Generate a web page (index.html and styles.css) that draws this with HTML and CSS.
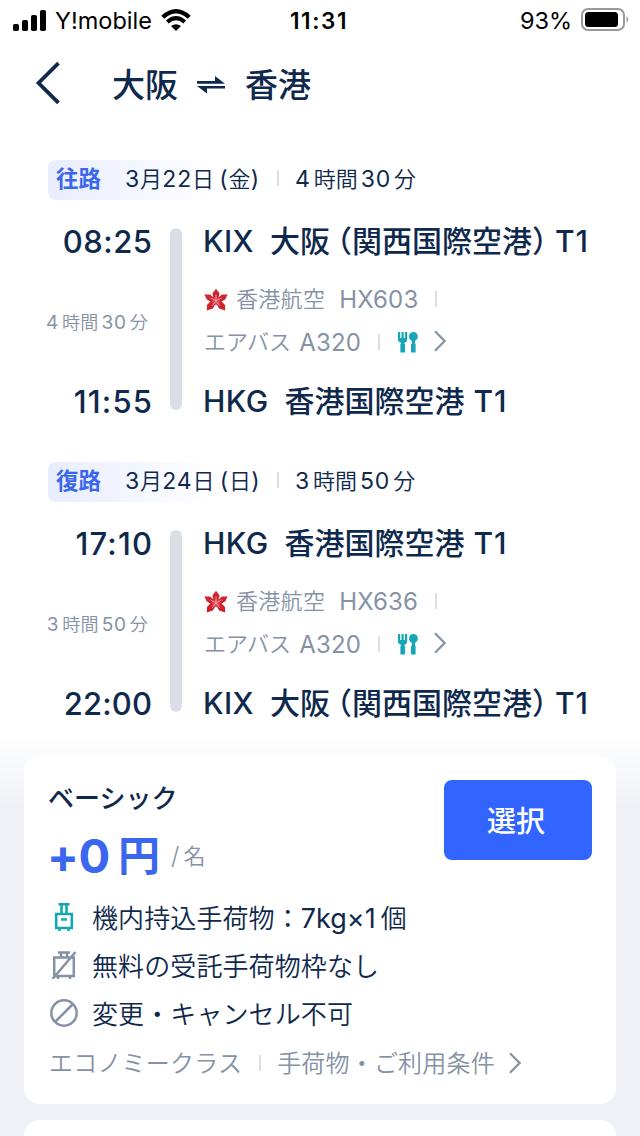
FILE: index.html
```html
<!DOCTYPE html>
<html lang="ja">
<head>
<meta charset="utf-8">
<title>大阪 ⇌ 香港</title>
<link rel="stylesheet" href="styles.css">
</head>
<body>
<svg class="defs" width="0" height="0" aria-hidden="true">
  <symbol id="flower" viewBox="0 0 24 24">
    <path fill="#cf2430" d="M12 .8 15.6 5.400 14.4 9.8 12 11.5 9.6 9.8 8.4 5.400ZM.4 6.6 6 6.600 10 9.800 11.200 13 7.400 14 2.800 11.400ZM23.600 6.600 18 6.600 14 9.800 12.800 13 16.600 14 21.200 11.400ZM2.800 22.600 3 17 7.400 12.600 11.600 12.600 11.400 16.200 8.900 20.400ZM21.200 22.600 21 17 16.600 12.600 12.400 12.600 12.600 16.200 15.100 20.400Z"/>
    <circle cx="12" cy="13.3" r="3.8" fill="#db4b53"/>
    <path stroke="#eda0a4" stroke-width=".9" fill="none" d="M12 6.500V13L6.500 9.800M12 13l5.500-3.200M12 13l-4 5M12 13l4 5"/>
  </symbol>
  <symbol id="meal" viewBox="0 0 20 22">
    <path fill="#16a6b6" d="M0 1H2.200V7H3.500V1H5.700V7H7V1H9.200V8.500Q9.200 11 6.400 11.700V13H7V21.500H2.400V13H3V11.700Q0 11 0 8.500ZM15.400 1A4.300 4.600 0 0 1 17 9.900V13H17.600V21.500H13V13H13.800V9.900A4.300 4.600 0 0 1 15.400 1Z"/>
  </symbol>
  <symbol id="next" viewBox="0 0 12 22"><path d="M1 1.300 10.600 11 1 20.700" fill="none" stroke="#8592a6" stroke-width="2.200"/></symbol>
</svg>

<header class="status">
  <svg class="signal" viewBox="0 0 33 21"><rect y="14" width="6" height="7" rx="1.800"/><rect x="9" y="10" width="6" height="11" rx="1.800"/><rect x="18" y="5" width="6" height="16" rx="1.800"/><rect x="27" width="6" height="21" rx="1.800"/></svg>
  <span class="carrier">Y!mobile</span>
  <svg class="wifi" viewBox="0 0 30 22"><path d="M1.700 8.200Q15-3.800 28.300 8.200" fill="none" stroke="#000" stroke-width="4.200"/><path d="M6.300 13Q15 5.400 23.700 13" fill="none" stroke="#000" stroke-width="4"/><path d="M10 17.100Q15 13.200 20 17.100L15 22Z"/></svg>
  <span class="clock">11:31</span>
  <span class="percent">93%</span>
  <svg class="battery" viewBox="0 0 48 24"><rect x="1" y="1" width="42" height="21" rx="6" fill="none" stroke="#999" stroke-width="2"/><rect x="4" y="4" width="33" height="15" rx="3.500"/><path d="M45.500 8Q49 11.500 45.500 15Z" fill="#999"/></svg>
</header>

<nav class="nav">
  <svg class="back" viewBox="0 0 24 42"><path d="M22 2 3 21 22 40" fill="none" stroke="#0f294d" stroke-width="3.600"/></svg>
  <h1 class="route"><span>大阪</span><svg class="swap" viewBox="0 0 28 18"><path fill="#0f294d" d="M0 5H18V0L28 7.700H0ZM28 12.500H10V17.500L0 10H28Z"/></svg><span>香港</span></h1>
</nav>

<main class="legs">
  <section class="leg">
    <div class="leg-head"><b class="tag">往路</b><span class="date"><i class="n">3</i>月<i class="n">22</i>日<i class="n paren">(</i>金<i class="n">)</i></span><span class="sep"></span><span class="dur"><i class="n">4</i>時間<i class="n">30</i>分</span></div>
    <div class="leg-body">
      <div class="times"><span class="time">08:25</span><span class="small"><i class="n">4</i>時間<i class="n">30</i>分</span><span class="time ones">11:55</span></div>
      <div class="bar"></div>
      <div class="details">
        <div class="airport"><span class="code">KIX</span><span class="place kix">大阪<i class="open">（</i>関西国際空港<i class="close">）</i></span><span class="terminal">T1</span></div>
        <div class="info first"><svg class="flower"><use href="#flower"/></svg><span class="carrier-name">香港航空</span><span class="n">HX603</span><span class="sep"></span></div>
        <div class="info"><span class="plane">エアバス</span><span class="n">A320</span><span class="sep"></span><svg class="meal"><use href="#meal"/></svg><svg class="next"><use href="#next"/></svg></div>
        <div class="airport last"><span class="code">HKG</span><span class="place">香港国際空港</span><span class="terminal">T1</span></div>
      </div>
    </div>
  </section>

  <section class="leg">
    <div class="leg-head"><b class="tag">復路</b><span class="date"><i class="n">3</i>月<i class="n">24</i>日<i class="n paren">(</i>日<i class="n">)</i></span><span class="sep"></span><span class="dur"><i class="n">3</i>時間<i class="n">50</i>分</span></div>
    <div class="leg-body">
      <div class="times"><span class="time ones">17:10</span><span class="small"><i class="n">3</i>時間<i class="n">50</i>分</span><span class="time tight">22:00</span></div>
      <div class="bar"></div>
      <div class="details">
        <div class="airport"><span class="code">HKG</span><span class="place">香港国際空港</span><span class="terminal">T1</span></div>
        <div class="info first"><svg class="flower"><use href="#flower"/></svg><span class="carrier-name">香港航空</span><span class="n">HX636</span><span class="sep"></span></div>
        <div class="info"><span class="plane">エアバス</span><span class="n">A320</span><span class="sep"></span><svg class="meal"><use href="#meal"/></svg><svg class="next"><use href="#next"/></svg></div>
        <div class="airport last"><span class="code">KIX</span><span class="place kix">大阪<i class="open">（</i>関西国際空港<i class="close">）</i></span><span class="terminal">T1</span></div>
      </div>
    </div>
  </section>
</main>

<section class="fares">
  <article class="card">
    <div class="card-top">
      <div>
        <h2 class="fare-name">ベーシック</h2>
        <div class="price"><b class="amount">+0</b><b class="yen">円</b><span class="slash">/</span><span class="per">名</span></div>
      </div>
      <button class="select">選択</button>
    </div>
    <ul class="features">
      <li><svg viewBox="0 0 28 28"><path d="M8.500 1.300H19.500M11.500 2V10M16.500 2V10" fill="none" stroke="#16a6b6" stroke-width="2.600"/><path d="M6.200 11H21.800V25H6.200ZM11 16.500H17M9.500 25V28M18.500 25V28" fill="none" stroke="#16a6b6" stroke-width="2.600"/></svg><span>機内持込手荷物：<i class="n">7kg×1</i>個</span></li>
      <li><svg viewBox="0 0 28 28"><path d="M8 1.500H20M11 2V6M17 2V6M4.200 6.500H23.800V25H4.200ZM8 25V28M20 25V28M2.500 28 25.500 1" fill="none" stroke="#8592a6" stroke-width="2.500"/></svg><span>無料の受託手荷物枠なし</span></li>
      <li><svg viewBox="0 0 28 28"><circle cx="14" cy="14" r="12.700" fill="none" stroke="#8592a6" stroke-width="2.500"/><path d="M5.500 22.500 22.500 5.500" stroke="#8592a6" stroke-width="2.500"/></svg><span>変更・キャンセル不可</span></li>
    </ul>
    <div class="card-foot"><span>エコノミークラス</span><span class="sep"></span><span>手荷物・ご利用条件</span><svg class="next"><use href="#next"/></svg></div>
  </article>
  <article class="card upcoming"></article>
</section>
</body>
</html>
```
FILE: styles.css
```css
* { box-sizing: border-box; }
body {
  margin: 0;
  height: 1136px;
  overflow: hidden;
  background: #fff;
  color: #0f294d;
  font-family: Inter, "Noto Sans CJK JP", sans-serif;
  white-space: nowrap;
}
i { font-style: normal; }
h1, h2, ul { margin: 0; padding: 0; font-weight: 500; }
svg { display: block; flex: none; }
.defs { position: absolute; }
.sep { width: 2px; height: 16px; background: #dadfe6; flex: none; }

.status { display: flex; align-items: center; height: 40px; padding-left: 13px; color: #000; font-size: 24px; line-height: 40px; }
.status > span { padding-top: 2px; }
.signal { width: 33px; height: 21px; }
.carrier { width: 97px; margin-left: 9px; font-size: 23.5px; }
.wifi { width: 30px; height: 22px; margin-left: 9px; }
.clock { width: 58px; margin-left: 99px; font-weight: 600; font-size: 22.500px; letter-spacing: 1.600px; }
.percent { width: 52px; margin-left: 172px; font-size: 23.500px; }
.battery { width: 48px; height: 24px; margin-left: 9px; }

.nav { display: flex; align-items: center; height: 88px; padding-left: 35px; }
.back { width: 26px; height: 44px; margin-bottom: 2px; }
.route { display: flex; align-items: center; margin-left: 51px; padding-top: 2px; font-size: 33px; line-height: 48px; }
.swap { width: 28px; height: 18px; margin: 0 20px 1px 19px; }

.legs { padding-top: 32px; height: 604px; }
.leg { height: 302px; }
.leg-head {
  display: flex;
  align-items: center;
  height: 40px;
  margin-left: 48px;
  padding-left: 8px;
  border-radius: 8px;
  background: linear-gradient(90deg, #e8edff, #fff 165px);
  font-size: 22px;
  line-height: 38px;
}
.leg-head > span:not(.sep), .tag { margin-bottom: 2px; }
.leg-head .sep { margin: 0 16px 4px 18px; }
.tag { width: 69px; color: #3b66ee; font-size: 22.500px; }
.date { width: 134px; font-weight: 350; letter-spacing: .3px; }
.n { font-size: 24px; font-weight: 400; letter-spacing: .2px; }
.leg-head .n { font-size: 23px; letter-spacing: .8px; }
.date .paren { margin-left: 5px; }
.dur { font-weight: 350; }
.dur .n, .small .n { margin-right: 3px; }
.dur .n + .n, .small .n + .n { margin-left: 3px; }

.leg-body { display: flex; padding: 20px 0 0 44px; height: 222px; }
.times { width: 108px; height: 204px; display: flex; flex-direction: column; align-items: flex-end; justify-content: space-between; line-height: 42px; }
.time { margin-right: -.5px; font-size: 31px; font-weight: 500; line-height: 44px; letter-spacing: .5px; }
.tight { margin-right: 0; letter-spacing: .1px; }
.ones { margin-right: -1.200px; letter-spacing: 1.200px; }
.small { margin-right: 4px; padding-top: 1px; font-size: 18px; font-weight: 350; color: #8592a6; letter-spacing: .2px; }
.small .n { font-size: 19px; }
.leg-body .small .n { letter-spacing: .8px; }
.bar { width: 12px; height: 182px; margin: 8px 21px 0 18px; border-radius: 6px; background: #dadfe6; }
.airport { display: flex; align-items: center; height: 42px; font-size: 30px; font-weight: 500; line-height: 42px; }
.code { margin-right: 16px; letter-spacing: .4px; }
.place { margin-right: 9px; }
.kix { margin-right: 8px; }
.terminal { letter-spacing: 1px; }
.open, .close { font-feature-settings: "halt"; }
.open { margin-left: 7px; }
.info { display: flex; align-items: center; height: 43px; color: #8592a6; font-size: 22px; font-weight: 350; line-height: 43px; }
.first { margin-top: 16px; }
.last { margin-top: 16px; }
.flower { width: 24px; height: 24px; margin: 0 8px 0 1px; }
.carrier-name { margin-right: 14px; letter-spacing: .3px; }
.info .sep { margin: 0 0 2px 17px; }
.plane { margin: 0 8px 0 1px; }
.meal { width: 20px; height: 22px; margin: 0 0 2px 18px; }
.next { width: 12px; height: 22px; margin: 0 0 3px 16px; }

.fares { display: flex; flex-direction: column; gap: 16px; height: 404px; padding: 24px 24px 0; background: linear-gradient(#fff, #eff1f6 76px); }
.card { flex: none; height: 348px; padding: 24px 24px 0; border-radius: 16px; background: #fff; }
.upcoming { height: 16px; padding: 0; border-radius: 16px 16px 0 0; }
.card-top { display: flex; justify-content: space-between; height: 114px; }
.fare-name { padding-top: 1px; font-size: 26px; line-height: 36px; }
.price { display: flex; align-items: center; height: 78px; line-height: 78px; color: #3b66ee; }
.amount { margin-left: -1px; width: 71px; font-size: 47px; font-weight: 700; letter-spacing: -.5px; }
.yen { font-size: 42px; }
.slash { margin-left: 11px; color: #8592a6; font-size: 24px; font-weight: 300; }
.per { margin-left: 4px; color: #8592a6; font-size: 22px; font-weight: 350; }
.select { width: 148px; height: 80px; padding: 0 4px 2px 0; border: 0; border-radius: 8px; background: #3264ff; color: #fff; font: 500 29px Inter, "Noto Sans CJK JP", sans-serif; }
.features { list-style: none; }
.features li { display: flex; align-items: center; height: 48px; font-size: 26px; line-height: 48px; font-weight: 350; letter-spacing: .1px; }
.features span { padding-top: 2px; }
.features svg { width: 28px; height: 28px; margin: 0 14px 2px 2px; }
.features .n { font-size: 27px; margin-right: 5px; letter-spacing: 0; }
.card-foot { display: flex; align-items: center; height: 52px; padding-left: 1px; color: #8592a6; font-size: 24px; font-weight: 350; letter-spacing: .2px; line-height: 52px; }
.card-foot .sep { margin: 0 16px 2px 17px; }
.card-foot .next { margin-left: 14px; }
```
